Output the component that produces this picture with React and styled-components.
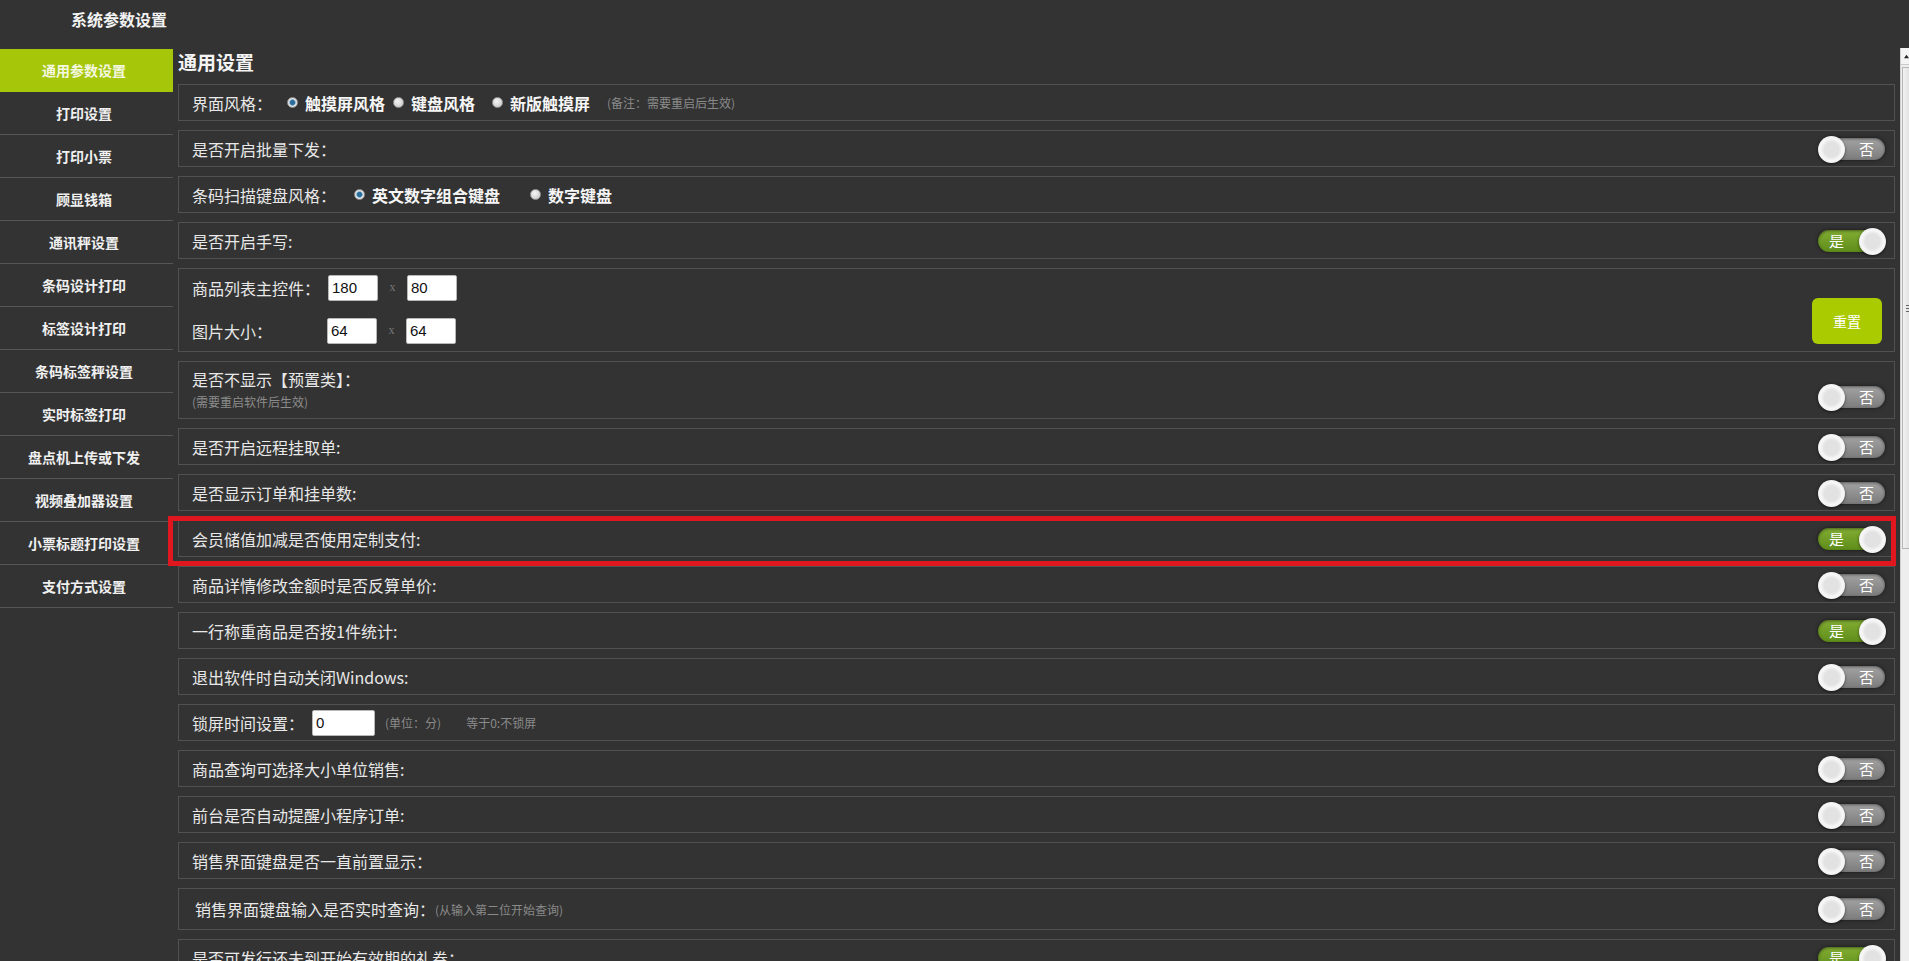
import React from "react";
import styled, { createGlobalStyle } from "styled-components";

const GlobalStyle = createGlobalStyle`
  html, body {
    margin: 0;
    height: 100%;
    overflow: hidden;
    background: #333333;
    font-family: "Noto Sans CJK SC", "Noto Sans", sans-serif;
  }
`;

const menu = [
  "通用参数设置",
  "打印设置",
  "打印小票",
  "顾显钱箱",
  "通讯秤设置",
  "条码设计打印",
  "标签设计打印",
  "条码标签秤设置",
  "实时标签打印",
  "盘点机上传或下发",
  "视频叠加器设置",
  "小票标题打印设置",
  "支付方式设置",
];

const Switch = ({ on }) => (
  <SwitchBox>
    <Track $on={on}>{on ? "是" : "否"}</Track>
    <Knob $on={on} />
  </SwitchBox>
);

const Radio = ({ checked, label, $ml }) => (
  <RadioOption $ml={$ml}>
    <Dot $checked={checked} />
    {label}
  </RadioOption>
);

const App = () => {
  return (
    <>
      <GlobalStyle />
      <Header>
        <Title>系统参数设置</Title>
      </Header>
      <Body>
        <Sidebar>
          {menu.map((item, index) => (
            <MenuItem key={item} $active={index === 0}>
              {item}
            </MenuItem>
          ))}
        </Sidebar>
        <Main>
          <Heading>通用设置</Heading>

          <Row>
            <Label>界面风格：</Label>
            <Radio checked label="触摸屏风格" $ml={15} />
            <Radio label="键盘风格" $ml={8} />
            <Radio label="新版触摸屏" $ml={17} />
            <Note $ml={17}>(备注：需要重启后生效)</Note>
          </Row>

          <Row>
            <Label>是否开启批量下发：</Label>
            <Spacer />
            <Switch />
          </Row>

          <Row>
            <Label>条码扫描键盘风格：</Label>
            <Radio checked label="英文数字组合键盘" $ml={18} />
            <Radio label="数字键盘" $ml={30} />
          </Row>

          <Row>
            <Label>是否开启手写:</Label>
            <Spacer />
            <Switch on />
          </Row>

          <Row $h={84}>
            <Column>
              <Line>
                <Label>商品列表主控件：</Label>
                <SizeInput defaultValue="180" $ml={8} />
                <Times>x</Times>
                <SizeInput defaultValue="80" />
              </Line>
              <Line>
                <Label>图片大小：</Label>
                <SizeInput defaultValue="64" $ml={55} />
                <Times>x</Times>
                <SizeInput defaultValue="64" />
              </Line>
            </Column>
            <Spacer />
            <ResetButton>重置</ResetButton>
          </Row>

          <Row $h={58}>
            <Column $top>
              <Label>是否不显示【预置类】：</Label>
              <SubNote>(需要重启软件后生效)</SubNote>
            </Column>
            <Spacer />
            <BottomSwitch>
              <Switch />
            </BottomSwitch>
          </Row>

          <Row>
            <Label>是否开启远程挂取单:</Label>
            <Spacer />
            <Switch />
          </Row>

          <Row>
            <Label>是否显示订单和挂单数:</Label>
            <Spacer />
            <Switch />
          </Row>

          <Row $highlight>
            <Label>会员储值加减是否使用定制支付:</Label>
            <Spacer />
            <Switch on />
          </Row>

          <Row>
            <Label>商品详情修改金额时是否反算单价:</Label>
            <Spacer />
            <Switch />
          </Row>

          <Row>
            <Label>一行称重商品是否按1件统计:</Label>
            <Spacer />
            <Switch on />
          </Row>

          <Row>
            <Label>退出软件时自动关闭Windows:</Label>
            <Spacer />
            <Switch />
          </Row>

          <Row>
            <Label>锁屏时间设置：</Label>
            <SizeInput defaultValue="0" $w={63} $ml={8} />
            <Note $ml={10}>(单位：分)</Note>
            <Note $ml={25}>等于0:不锁屏</Note>
          </Row>

          <Row>
            <Label>商品查询可选择大小单位销售:</Label>
            <Spacer />
            <Switch />
          </Row>

          <Row>
            <Label>前台是否自动提醒小程序订单:</Label>
            <Spacer />
            <Switch />
          </Row>

          <Row>
            <Label>销售界面键盘是否一直前置显示：</Label>
            <Spacer />
            <Switch />
          </Row>

          <Row $h={42}>
            <Label $indent={3}>销售界面键盘输入是否实时查询：</Label>
            <Note>(从输入第二位开始查询)</Note>
            <Spacer />
            <Switch />
          </Row>

          <Row>
            <Label>是否可发行还未到开始有效期的礼券：</Label>
            <Spacer />
            <Switch on />
          </Row>
        </Main>
        <ScrollBar>
          <ArrowButton>
            <svg width="7" height="5" viewBox="0 0 7 5">
              <path d="M0 5 L3.5 0 L7 5 Z" fill="#222" />
            </svg>
          </ArrowButton>
          <Thumb>
            <Grip />
          </Thumb>
        </ScrollBar>
      </Body>
    </>
  );
};

const Header = styled.div`
  height: 49px;
  display: flex;
  align-items: flex-start;
`;

const Title = styled.div`
  margin-left: 71px;
  line-height: 38px;
  font-size: 16px;
  font-weight: 700;
  color: #f2f2f2;
`;

const Body = styled.div`
  display: flex;
  align-items: flex-start;
`;

const Sidebar = styled.div`
  width: 173px;
  flex: none;
`;

const MenuItem = styled.div`
  height: 43px;
  box-sizing: border-box;
  display: flex;
  align-items: center;
  justify-content: center;
  font-size: 14px;
  font-weight: 700;
  color: ${(p) => (p.$active ? "#f4f8e0" : "#f0f0f0")};
  background: ${(p) => (p.$active ? "#a6c60a" : "transparent")};
  border-bottom: 1px solid ${(p) => (p.$active ? "#a6c60a" : "#565656")};
  padding-right: 5px;
`;

const Main = styled.div`
  flex: 1;
  margin-left: 5px;
  min-width: 0;
`;

const Heading = styled.h2`
  margin: 0;
  height: 35px;
  line-height: 26px;
  font-size: 19px;
  font-weight: 700;
  color: #f4f4f4;
`;

const Row = styled.div`
  position: relative;
  box-sizing: border-box;
  height: ${(p) => p.$h || 37}px;
  margin-bottom: 9px;
  border: 1px solid #515151;
  display: flex;
  align-items: center;
  padding: 0 8px 0 13px;
  ${(p) =>
    p.$highlight &&
    `
    &::after {
      content: "";
      position: absolute;
      left: -11px;
      right: -2px;
      top: -5px;
      bottom: -10px;
      border: 5px solid #e0171f;
      pointer-events: none;
    }
  `}
`;

const Label = styled.span`
  font-size: 16px;
  color: #e8e8e8;
  white-space: nowrap;
  margin-left: ${(p) => p.$indent || 0}px;
`;

const Spacer = styled.div`
  flex: 1;
`;

const Column = styled.div`
  display: flex;
  flex-direction: column;
  align-self: stretch;
  justify-content: ${(p) => (p.$top ? "flex-start" : "center")};
  gap: ${(p) => (p.$top ? 0 : 17)}px;
  padding-top: ${(p) => (p.$top ? 5 : 0)}px;
  ${(p) => (p.$top ? "" : "padding-bottom: 2px;")}
`;

const Line = styled.div`
  display: flex;
  align-items: center;
  height: 26px;
`;

const SubNote = styled.span`
  margin-top: 2px;
  font-size: 12px;
  line-height: 18px;
  color: #8c8c8c;
`;

const Note = styled.span`
  margin-left: ${(p) => p.$ml || 0}px;
  font-size: 12px;
  color: #8a8a8a;
  white-space: nowrap;
`;

const RadioOption = styled.span`
  display: inline-flex;
  align-items: center;
  gap: 7px;
  margin-left: ${(p) => p.$ml || 0}px;
  font-size: 16px;
  font-weight: 700;
  color: #f6f6f6;
  white-space: nowrap;
`;

const Dot = styled.span`
  width: 11px;
  height: 11px;
  box-sizing: border-box;
  border-radius: 50%;
  flex: none;
  background: ${(p) =>
    p.$checked
      ? "radial-gradient(circle, #2b6e9c 0 34%, #6fa6c8 44%, #e6e6e6 56%, #c4c4c4 100%)"
      : "radial-gradient(circle at 40% 35%, #f4f4f4 0%, #d8d8d8 60%, #b8b8b8 100%)"};
  border: 1px solid #9a9a9a;
`;

const SizeInput = styled.input`
  box-sizing: border-box;
  width: ${(p) => p.$w || 50}px;
  height: 26px;
  margin-left: ${(p) => p.$ml || 0}px;
  padding: 0 3px;
  border: 1px solid #b8b8b8;
  border-radius: 2px;
  background: #ffffff;
  font-family: "Liberation Sans", Arial, sans-serif;
  font-size: 15px;
  color: #111;
  outline: none;
`;

const Times = styled.span`
  width: 29px;
  text-align: center;
  font-family: "Liberation Serif", serif;
  font-size: 12px;
  color: #777;
`;

const ResetButton = styled.button`
  align-self: flex-end;
  margin: 0 4px 7px 0;
  width: 70px;
  height: 46px;
  border: none;
  border-radius: 6px;
  background: #aacb00;
  color: #ffffff;
  font-family: "Noto Sans CJK SC", sans-serif;
  font-size: 14px;
`;

const BottomSwitch = styled.div`
  align-self: flex-end;
  margin-bottom: 8px;
`;

const SwitchBox = styled.div`
  position: relative;
  width: 68px;
  height: 26px;
  flex: none;
`;

const Track = styled.div`
  position: absolute;
  left: ${(p) => (p.$on ? 0 : 2)}px;
  right: ${(p) => (p.$on ? 4 : 1)}px;
  top: 2px;
  height: 22px;
  box-sizing: border-box;
  border-radius: 11px;
  background: ${(p) =>
    p.$on
      ? "linear-gradient(#82ad33, #5f8d1a)"
      : "linear-gradient(#a3a3a3, #7c7c7c)"};
  box-shadow: inset 0 1px 3px rgba(0, 0, 0, 0.45), 0 0 4px rgba(0, 0, 0, 0.55);
  color: #ffffff;
  font-size: 15px;
  line-height: 22px;
  padding: ${(p) => (p.$on ? "0 0 0 11px" : "0 11px 0 0")};
  text-align: ${(p) => (p.$on ? "left" : "right")};
`;

const Knob = styled.div`
  position: absolute;
  top: 0;
  ${(p) => (p.$on ? "right: 0;" : "left: 0;")}
  width: 27px;
  height: 27px;
  border-radius: 50%;
  background: radial-gradient(circle, #e2e2e2 0 38%, #f7f7f7 58%, #dedede 100%);
  box-shadow: 0 1px 3px rgba(0, 0, 0, 0.55);
`;

const ScrollBar = styled.div`
  flex: none;
  width: 8px;
  margin-left: 5px;
  margin-top: -1px;
  height: 913px;
  background: #eeeeee;
  border-left: 1px solid #d0d0d0;
  overflow: hidden;
`;

const ArrowButton = styled.div`
  height: 16px;
  display: flex;
  align-items: center;
  padding-left: 3px;
  border-bottom: 1px solid #c8c8c8;
  background: #f4f4f4;
`;

const Thumb = styled.div`
  margin: 2px 0 0 1px;
  height: 480px;
  border: 1px solid #b5b5b5;
  border-right: none;
  background: linear-gradient(90deg, #f2f2f2, #e2e2e2);
  display: flex;
  align-items: center;
`;

const Grip = styled.div`
  margin-left: 3px;
  width: 6px;
  height: 7px;
  background: repeating-linear-gradient(#666 0 1px, transparent 1px 3px);
`;

export default App;
